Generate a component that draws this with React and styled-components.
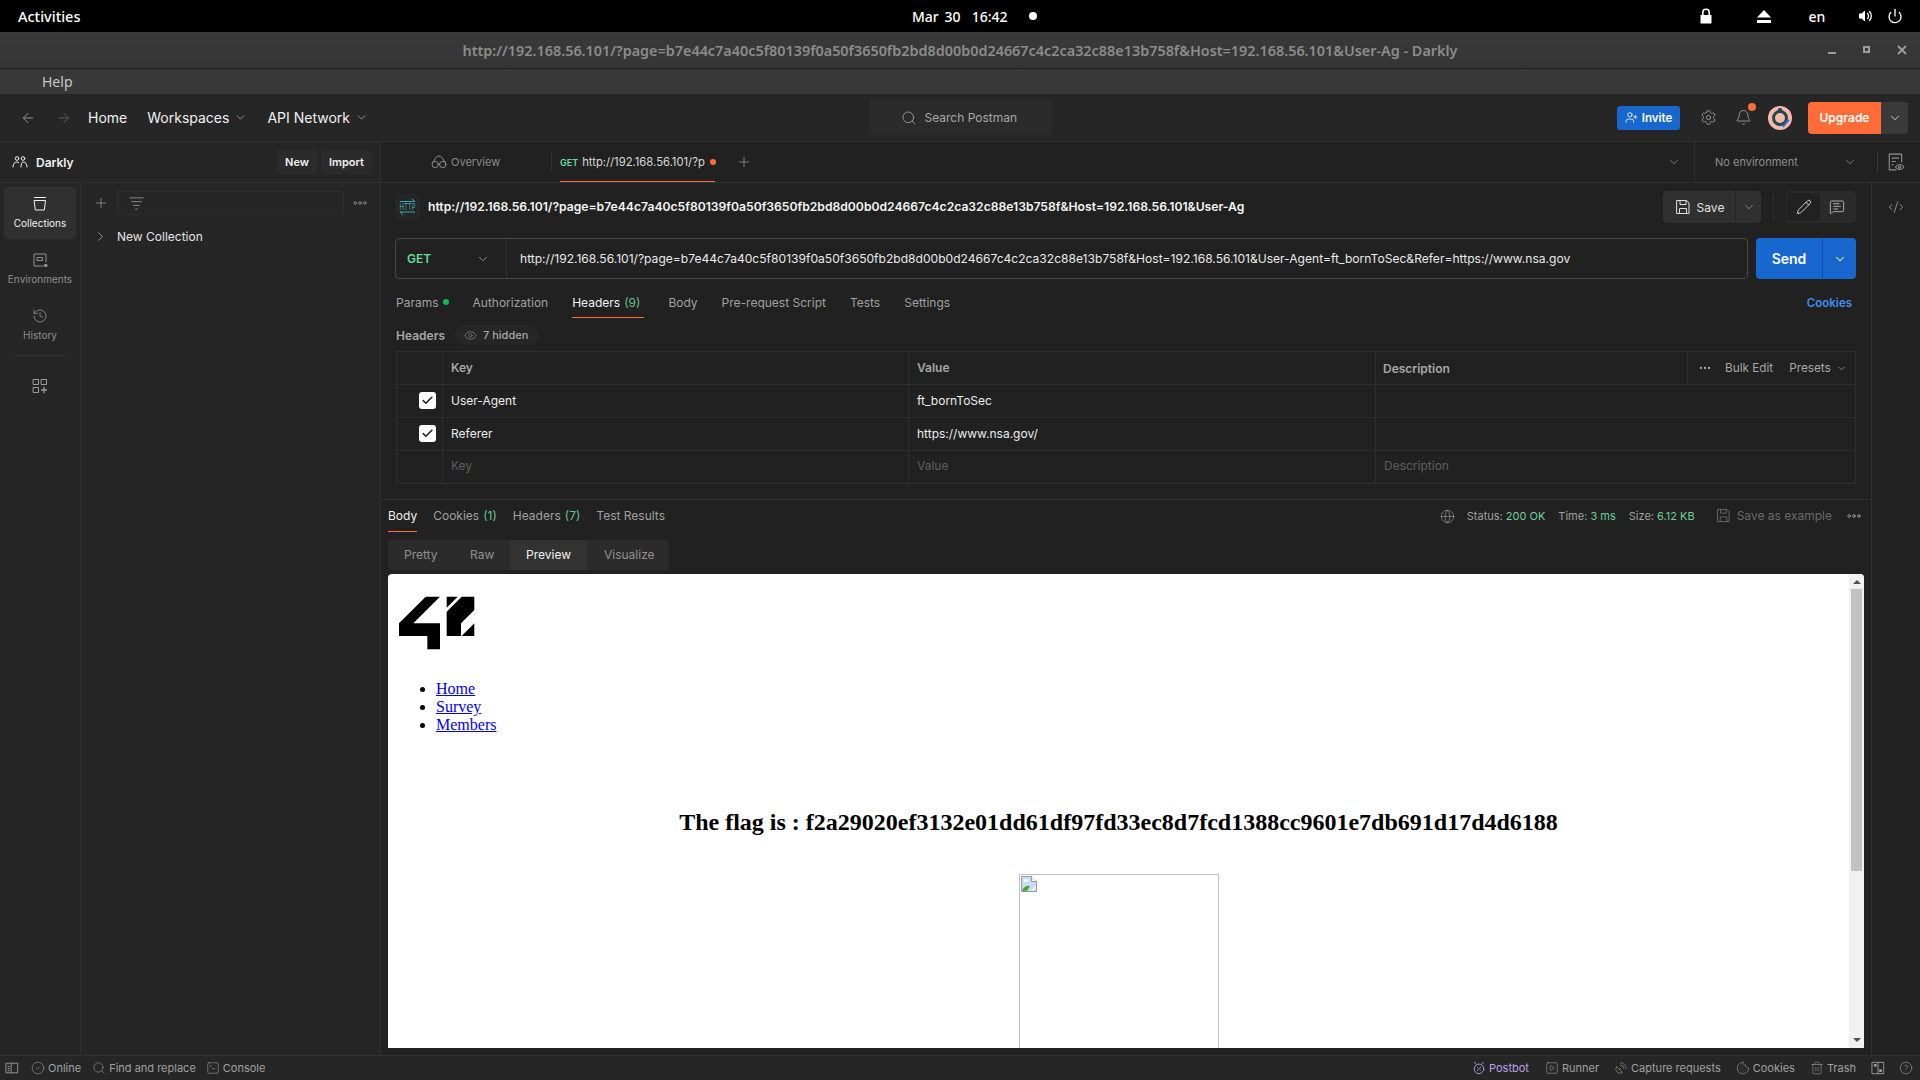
import styled, { createGlobalStyle } from 'styled-components'
import {
  ArrowLeft, ArrowRight, ChevronDown, ChevronRight, Search, Settings, Bell, Plus, History, Pencil,
  CodeXml, Eye, Globe, CircleCheck, SquareTerminal, SquarePlay, SatelliteDish, Cookie, Trash2, CircleHelp,
  Power, Check, MessageSquareText, UserPlus, Ellipsis,
} from 'lucide-react'

const GlobalStyle = createGlobalStyle`
  html, body { margin: 0; padding: 0; background: #212121; }
  * { box-sizing: border-box; }
`

const Page = styled.div`
  width: 1920px;
  height: 1080px;
  overflow: hidden;
  display: flex;
  flex-direction: column;
  background: #212121;
  font-family: Inter, "Liberation Sans", sans-serif;
  font-size: 12px;
  color: #a6a6a6;
`

const TopBar = styled.div`
  flex: 0 0 32px;
  background: #000;
  color: #fff;
  display: grid;
  grid-template-columns: 912px 1fr auto;
  align-items: center;
  font-family: "Noto Sans", sans-serif;
  font-size: 14px;
  font-weight: 500;
`

const Activities = styled.span`
  padding-left: 18px;
  font-size: 14.5px;
`

const Clock = styled.div`
  display: flex;
  align-items: center;
  gap: 21px;
  word-spacing: 2px;
`

const ClockDot = styled.span`
  width: 8px;
  height: 8px;
  border-radius: 50%;
  background: #fff;
`

const Tray = styled.div`
  display: flex;
  align-items: center;
  padding-right: 13px;
`

const TrayItem = styled.span`
  display: flex;
  justify-content: center;
  align-items: center;
  width: ${p => p.$w}px;
`

const TitleBar = styled.div`
  flex: 0 0 37px;
  position: relative;
  display: flex;
  align-items: center;
  justify-content: center;
  background: linear-gradient(#3a3a3a, #353535);
  border-bottom: 1px solid #222;
  color: #8c8c8c;
  font-family: "Noto Sans", sans-serif;
  font-size: 14.4px;
  font-weight: 600;
`

const WindowButtons = styled.div`
  position: absolute;
  right: 13px;
  top: 0;
  height: 36px;
  display: flex;
  align-items: center;
  gap: 25px;
  color: #9c9c9c;
`

const MenuBar = styled.div`
  flex: 0 0 25px;
  background: #383838;
  color: #c8c8c8;
  padding-left: 42px;
  font-family: "Noto Sans", sans-serif;
  font-size: 14px;
  line-height: 25px;
`

const Header = styled.div`
  flex: 0 0 48px;
  display: grid;
  grid-template-columns: 1fr 183px 1fr;
  align-items: center;
  background: #262626;
  border-bottom: 1px solid #303030;
`

const HeaderLeft = styled.nav`
  display: flex;
  align-items: center;
  padding-left: 20px;
`

const NavArrow = styled.span`
  display: flex;
  width: 16px;
  margin-right: ${p => p.$mr}px;
  color: ${p => (p.$off ? '#5c5c5c' : '#909090')};
`

const NavLink = styled.span`
  display: flex;
  align-items: center;
  gap: 5px;
  margin-right: ${p => p.$mr}px;
  font-size: 14px;
  color: #f0f0f0;
  svg { color: #a6a6a6; }
`

const SearchBox = styled.div`
  height: 35px;
  display: flex;
  align-items: center;
  gap: 8px;
  padding-left: 32px;
  background: #2b2b2b;
  border-radius: 4px;
  color: #a6a6a6;
`

const HeaderRight = styled.div`
  display: flex;
  align-items: center;
  justify-content: flex-end;
  padding-right: 12px;
`

const InviteButton = styled.span`
  width: 63px;
  height: 24px;
  display: flex;
  align-items: center;
  justify-content: center;
  gap: 4px;
  background: #1767cf;
  border-radius: 3px;
  color: #fff;
  font-weight: 600;
  font-size: 11.5px;
`

const HeaderIcon = styled.span`
  position: relative;
  display: flex;
  margin-left: ${p => p.$ml}px;
  color: #a0a0a0;
`

const BellDot = styled.span`
  position: absolute;
  top: -6px;
  right: -4px;
  width: 8px;
  height: 8px;
  border-radius: 50%;
  background: #ff6c37;
`

const UpgradeGroup = styled.div`
  display: flex;
  height: 32px;
  margin-left: 16px;
  border-radius: 4px;
  overflow: hidden;
`

const UpgradeButton = styled.span`
  width: 73px;
  display: flex;
  align-items: center;
  justify-content: center;
  background: #ff6c37;
  color: #fff;
  font-weight: 600;
`

const UpgradeCaret = styled.span`
  width: 27px;
  display: flex;
  align-items: center;
  justify-content: center;
  background: #3a3a3a;
  color: #e0e0e0;
`

const Body = styled.div`
  flex: 1;
  display: flex;
  min-height: 0;
`

const Sidebar = styled.aside`
  flex: 0 0 381px;
  display: flex;
  flex-direction: column;
  background: #262626;
  border-right: 1px solid #303030;
`

const SidebarHeader = styled.div`
  flex: 0 0 41px;
  display: flex;
  align-items: center;
  padding: 0 8px 0 12px;
  border-bottom: 1px solid #303030;
  color: #f0f0f0;
`

const TeamName = styled.strong`
  margin-left: 8px;
  margin-right: auto;
  font-weight: 600;
`

const SmallButton = styled.span`
  width: ${p => p.$w}px;
  height: 24px;
  display: flex;
  align-items: center;
  justify-content: center;
  margin-left: 4px;
  background: #2b2b2b;
  border-radius: 4px;
  color: #f0f0f0;
  font-size: 11px;
  font-weight: 600;
`

const SidebarBody = styled.div`
  flex: 1;
  display: flex;
`

const SideNav = styled.div`
  flex: 0 0 81px;
  display: flex;
  flex-direction: column;
  align-items: center;
  padding-top: 4px;
  border-right: 1px solid #303030;
`

const NavItem = styled.div`
  width: 72px;
  height: 52px;
  margin-bottom: 4px;
  padding-bottom: 2px;
  display: flex;
  flex-direction: column;
  align-items: center;
  justify-content: center;
  gap: 5px;
  border-radius: 4px;
  font-size: 10px;
  background: ${p => (p.$active ? '#303030' : 'transparent')};
  color: ${p => (p.$active ? '#f0f0f0' : '#8f8f8f')};
`

const NavDivider = styled.div`
  width: 54px;
  height: 1px;
  margin: 0 0 22px;
  background: #303030;
`

const NavAdd = styled.span`
  display: flex;
  color: #9c9c9c;
`

const Tree = styled.div`
  flex: 1;
  padding: 8px 0 0 12px;
`

const TreeTools = styled.div`
  display: flex;
  align-items: center;
  height: 24px;
  color: #8f8f8f;
`

const FilterBox = styled.div`
  width: 227px;
  height: 24px;
  margin-left: 8px;
  padding-left: 11px;
  display: flex;
  align-items: center;
  border: 1px solid #2e2e2e;
  border-radius: 2px;
`

const TreeMenu = styled.span`
  display: flex;
  margin-left: 9px;
`

const TreeRow = styled.div`
  display: flex;
  align-items: center;
  gap: 9px;
  height: 24px;
  margin-top: 9px;
  color: #e4e4e4;
  svg { color: #b0b0b0; }
`

const Main = styled.main`
  flex: 1;
  min-width: 0;
  display: flex;
  flex-direction: column;
`

const TabBar = styled.div`
  flex: 0 0 41px;
  display: flex;
  align-items: stretch;
  border-bottom: 1px solid #303030;
`

const OverviewTab = styled.div`
  width: 170px;
  padding-left: 50px;
  display: flex;
  align-items: center;
  gap: 4px;
  color: #8a8a8a;
  font-size: 11px;
`

const RequestTab = styled.div`
  position: relative;
  width: 155px;
  margin-left: 9px;
  display: flex;
  align-items: center;
  gap: 4px;
  color: #d8d8d8;
  font-size: 11.25px;
  white-space: nowrap;
  box-shadow: inset 0 -1px 0 #ff6c37;
  &::before {
    content: '';
    position: absolute;
    left: -9px;
    top: 10px;
    bottom: 10px;
    width: 1px;
    background: #303030;
  }
`

const TabMethod = styled.span`
  color: #6bdd9a;
  font-size: 9px;
  font-weight: 600;
`

const UnsavedDot = styled.span`
  flex: 0 0 6px;
  height: 6px;
  margin-left: 1px;
  border-radius: 50%;
  background: #ff6c37;
`

const TabPlus = styled.span`
  display: flex;
  align-items: center;
  margin-left: 21px;
  color: #8f8f8f;
`

const TabEnd = styled.div`
  margin-left: auto;
  display: flex;
  align-items: center;
  color: #8f8f8f;
`

const TabCaret = styled.span`
  display: flex;
  margin-right: 13px;
`

const EnvSelect = styled.div`
  width: 183px;
  height: 100%;
  padding: 0 20px;
  display: flex;
  align-items: center;
  justify-content: space-between;
  border-left: 1px solid #303030;
  font-size: 11px;
`

const EnvEye = styled.span`
  width: 43px;
  height: 20px;
  padding-left: 9px;
  display: flex;
  align-items: center;
  border-left: 1px solid #3a3a3a;
`

const Content = styled.div`
  flex: 1;
  display: flex;
  min-height: 0;
`

const Workspace = styled.div`
  flex: 0 0 1490px;
  display: flex;
  flex-direction: column;
  min-height: 0;
`

const Rail = styled.div`
  flex: 1;
  border-left: 1px solid #303030;
  display: flex;
  justify-content: center;
  padding-top: 16px;
  color: #a0a0a0;
`

const RequestPane = styled.section`
  flex: 0 0 316px;
  padding: 8px 15px 0 14px;
`

const NameRow = styled.div`
  display: flex;
  align-items: center;
  height: 32px;
`

const HttpBadge = styled.span`
  width: 25px;
  height: 26px;
  display: flex;
  align-items: center;
  justify-content: center;
  background: #262626;
  border-radius: 4px;
`

const RequestName = styled.strong`
  margin-left: 8px;
  margin-right: auto;
  padding-bottom: 2px;
  color: #f4f4f4;
  font-size: 12.15px;
  font-weight: 600;
  white-space: nowrap;
`

const SaveGroup = styled.div`
  width: 98px;
  height: 32px;
  display: flex;
  background: #303030;
  border-radius: 4px;
  color: #e0e0e0;
`

const SaveButton = styled.span`
  width: 73px;
  padding-left: 1px;
  display: flex;
  align-items: center;
  justify-content: center;
  gap: 6px;
  border-right: 1px solid #262626;
`

const SaveCaret = styled.span`
  flex: 1;
  display: flex;
  align-items: center;
  justify-content: center;
  color: #a0a0a0;
`

const ModeGroup = styled.div`
  width: 70px;
  height: 32px;
  margin-left: 25px;
  padding: 2px 3px 2px 1px;
  display: flex;
  align-items: center;
  background: #2b2b2b;
  border-radius: 4px;
  position: relative;
  color: #c4c4c4;
  &::before {
    content: '';
    position: absolute;
    left: -13px;
    top: 2px;
    bottom: 2px;
    width: 1px;
    background: #2e2e2e;
  }
`

const ModeItem = styled.span`
  width: 33px;
  height: 28px;
  display: flex;
  align-items: center;
  justify-content: center;
  border-radius: 3px;
  background: ${p => (p.$active ? '#212121' : 'transparent')};
  color: ${p => (p.$active ? '#f0f0f0' : 'inherit')};
`

const UrlRow = styled.div`
  display: flex;
  gap: 8px;
  margin-top: 15px;
  height: 41px;
`

const UrlInput = styled.div`
  flex: 1;
  display: flex;
  align-items: center;
  border: 1px solid #4a4a4a;
  border-radius: 4px;
`

const MethodSelect = styled.div`
  width: 111px;
  height: 100%;
  padding: 0 16px 0 11px;
  display: flex;
  align-items: center;
  justify-content: space-between;
  border-right: 1px solid #303030;
  color: #6bdd9a;
  font-weight: 600;
  svg { color: #a0a0a0; }
`

const UrlText = styled.span`
  padding-left: 13px;
  color: #eaeaea;
  font-size: 12.07px;
  white-space: nowrap;
`

const SendGroup = styled.div`
  width: 100px;
  display: flex;
  background: #1767cf;
  border-radius: 4px;
  color: #fff;
`

const SendButton = styled.span`
  width: 67px;
  display: flex;
  align-items: center;
  justify-content: center;
  font-size: 14px;
  font-weight: 600;
  border-right: 1px solid #12519f;
`

const SendCaret = styled.span`
  flex: 1;
  display: flex;
  align-items: center;
  justify-content: center;
`

const ReqTabs = styled.div`
  display: flex;
  gap: 24px;
  height: 31px;
  margin: 8px 0 0 1px;
`

const ReqTab = styled.span`
  display: flex;
  align-items: center;
  gap: 4px;
  padding: 0 ${p => p.$pr || 0}px 1px 0;
  white-space: nowrap;
  color: ${p => (p.$active ? '#f0f0f0' : '#a0a0a0')};
  box-shadow: ${p => (p.$active ? 'inset 0 -1px 0 #ff6c37' : 'none')};
`

const Count = styled.span`
  color: #5fc48c;
`

const GreenDot = styled.span`
  width: 6px;
  height: 6px;
  border-radius: 50%;
  background: #0cbb52;
`

const CookiesLink = styled.span`
  margin-left: auto;
  margin-right: 4px;
  align-self: center;
  color: #3f8fea;
  font-weight: 600;
  font-size: 11.5px;
`

const HeadersRow = styled.div`
  display: flex;
  align-items: center;
  gap: 10px;
  margin: 7px 0 6px 1px;
  height: 20px;
`

const HeadersLabel = styled.strong`
  font-weight: 600;
  color: #a6a6a6;
`

const HiddenPill = styled.span`
  width: 84px;
  height: 20px;
  padding-left: 9px;
  display: flex;
  align-items: center;
  gap: 6px;
  background: #262626;
  border-radius: 10px;
  color: #a6a6a6;
  font-size: 11px;
  font-weight: 500;
  svg { color: #7a7a7a; }
`

const Table = styled.div`
  width: 1460px;
  margin-left: 1px;
  border: 1px solid #2e2e2e;
  border-bottom: 0;
`

const TableRow = styled.div`
  display: grid;
  grid-template-columns: 45px 466px 467px 1fr;
  height: 33px;
  border-bottom: 1px solid #2e2e2e;
`

const Cell = styled.div`
  display: flex;
  align-items: center;
  padding: 0 0 ${p => (p.$muted ? 4 : 2)}px 8px;
  border-left: ${p => (p.$first ? '0' : '1px solid #2e2e2e')};
  font-weight: ${p => (p.$head ? 600 : 400)};
  color: ${p => (p.$head ? '#a6a6a6' : p.$muted ? '#5e5e5e' : '#ececec')};
`

const CheckCell = styled(Cell)`
  padding-left: 22px;
`

const CheckBox = styled.span`
  width: 17px;
  height: 17px;
  display: flex;
  align-items: center;
  justify-content: center;
  background: #fff;
  border-radius: 3px;
  color: #212121;
`

const DescriptionHead = styled(Cell)`
  padding: 0 0 0 7px;
  justify-content: space-between;
`

const TableTools = styled.div`
  width: 168px;
  height: 100%;
  padding-left: 10px;
  display: flex;
  align-items: center;
  border-left: 1px solid #2e2e2e;
  font-weight: 400;
  font-size: 11.75px;
`

const BulkEdit = styled.span`
  margin: 0 16px 0 13px;
  white-space: nowrap;
`

const PresetsMenu = styled.span`
  display: flex;
  align-items: center;
  gap: 5px;
`

const ResponsePane = styled.section`
  flex: 1;
  min-height: 0;
  display: flex;
  flex-direction: column;
  padding: 0 7px 7px;
  border-top: 1px solid #303030;
`

const ResTabs = styled.div`
  flex: 0 0 32px;
  display: flex;
  gap: 16px;
`

const StatusInfo = styled.div`
  margin-left: auto;
  display: flex;
  align-items: center;
  font-size: 11px;
  color: #a0a0a0;
  white-space: nowrap;
`

const StatusPair = styled.span`
  margin-left: ${p => p.$ml}px;
`

const Good = styled.span`
  color: #6bd09b;
`

const SaveExample = styled.span`
  display: flex;
  align-items: center;
  gap: 6px;
  margin-left: 21px;
  padding-bottom: 2px;
  color: #6a6a6a;
  font-size: 12px;
`

const StatusMenu = styled.span`
  display: flex;
  margin: 0 3px 0 15px;
`

const ModeTabs = styled.div`
  flex: 0 0 30px;
  width: 281px;
  margin: 8px 0 4px;
  display: flex;
  background: #2b2b2b;
  border-radius: 4px;
  overflow: hidden;
`

const ModeTab = styled.span`
  width: ${p => p.$w}px;
  padding: 0 0 1px ${p => p.$pl}px;
  display: flex;
  align-items: center;
  background: ${p => (p.$active ? '#333' : 'transparent')};
  color: ${p => (p.$active ? '#f0f0f0' : '#8f8f8f')};
`

const Frame = styled.div`
  flex: 1;
  min-height: 0;
  display: flex;
  background: #fff;
  border-radius: 4px 4px 0 0;
  overflow: hidden;
`

const FrameDoc = styled.div`
  flex: 1;
  padding: 8px;
  overflow: hidden;
  color: #000;
  font-family: "Liberation Serif", serif;
  font-size: 16px;
  line-height: 18px;
`

const Logo = styled.svg`
  display: block;
  width: 80px;
  height: 80px;
`

const DocList = styled.ul`
  margin: 18px 0 16px;
  padding-left: 40px;
  a { color: #0000ee; text-decoration: underline; }
`

const Flag = styled.h2`
  margin: 75px 0 38px;
  font-size: 24px;
  line-height: 27px;
  text-align: center;
`

const BrokenImage = styled.div`
  width: 200px;
  height: 200px;
  margin: 0 auto;
  padding: 1px;
  border: 1px solid #c0c0c0;
`

const Scrollbar = styled.div`
  flex: 0 0 15px;
  display: flex;
  flex-direction: column;
  align-items: center;
  background: #f1f1f1;
  padding-top: 6px;
`

const ScrollArrow = styled.span`
  width: 0;
  height: 0;
  border-left: 4px solid transparent;
  border-right: 4px solid transparent;
  border-${p => (p.$down ? 'top' : 'bottom')}: 4px solid #505050;
`

const ScrollThumb = styled.span`
  width: 11px;
  height: 282px;
  margin-top: 5px;
  margin-bottom: auto;
  background: #c1c1c1;
`

const ScrollEnd = styled.span`
  margin-bottom: 6px;
  display: flex;
`

const StatusBar = styled.footer`
  flex: 0 0 25px;
  display: flex;
  align-items: center;
  padding: 0 7px 0 5px;
  background: #262626;
  border-top: 1px solid #303030;
  color: #a0a0a0;
  font-size: 11px;
`

const StatusItem = styled.span`
  display: flex;
  align-items: center;
  gap: 3px;
  margin-left: ${p => p.$ml || 0}px;
  color: ${p => p.$color || 'inherit'};
  white-space: nowrap;
`

const StatusSpacer = styled.span`
  flex: 1;
`

const Icon = ({ size = 16, children, fill = 'none', sw = 1 }) => (
  <svg width={size} height={size} viewBox="0 0 16 16" fill={fill} stroke="currentColor" strokeWidth={sw} strokeLinecap="round" strokeLinejoin="round">
    {children}
  </svg>
)

const LockIcon = () => (
  <svg width="14" height="16" viewBox="0 0 14 16" fill="#fff">
    <path d="M1.5 7h11v8.5h-11z" />
    <path d="M3.8 7V4.5a3.2 3.2 0 0 1 6.4 0V7" fill="none" stroke="#fff" strokeWidth="1.6" />
  </svg>
)

const EjectIcon = () => (
  <svg width="16" height="15" viewBox="0 0 16 15" fill="#fff">
    <path d="M8 1l7 7.5H1z" />
    <path d="M1 11h14v3H1z" />
  </svg>
)

const VolumeIcon = () => (
  <svg width="16" height="16" viewBox="0 0 16 16" fill="#fff">
    <path d="M1 5.5h2.5L7 2.5v11l-3.5-3H1z" />
    <path d="M9.2 5a4 4 0 0 1 0 6M11.2 3a7 7 0 0 1 0 10" fill="none" stroke="#fff" strokeWidth="1.3" />
  </svg>
)

const TeamIcon = () => (
  <Icon size={16}>
    <circle cx="5" cy="4.5" r="1.8" />
    <circle cx="11" cy="4.5" r="1.8" />
    <path d="M1 13c0-3 1.5-5 3.8-5 .8 0 1.5.2 2 .7M9 13c0-3 .7-5 2.2-5 2.3 0 3.8 2 3.8 5" />
  </Icon>
)

const CollectionsIcon = () => (
  <Icon>
    <path d="M2.5 1.5h11" />
    <path d="M2.5 4.5h11l-1.2 9.5H3.7z" />
  </Icon>
)

const EnvironmentsIcon = () => (
  <Icon>
    <path d="M14 10V2H2v12h9" />
    <rect x="5.5" y="5.5" width="5" height="3" />
    <rect x="13" y="12.5" width="2" height="2" fill="currentColor" />
  </Icon>
)

const AddBlocksIcon = () => (
  <Icon>
    <rect x="1.5" y="1.5" width="5" height="5" />
    <rect x="9.5" y="1.5" width="5" height="5" />
    <rect x="1.5" y="9.5" width="5" height="5" />
    <path d="M12 9.5v5M9.5 12h5" strokeWidth="1.4" />
  </Icon>
)

const FilterIcon = () => (
  <Icon size={15}>
    <path d="M1 2h14M3 6h10M5 10h6M7 14h2" />
  </Icon>
)

const RingDots = () => (
  <Icon size={14}>
    <circle cx="2.5" cy="8" r="1.5" />
    <circle cx="8" cy="8" r="1.5" />
    <circle cx="13.5" cy="8" r="1.5" />
  </Icon>
)

const OverviewIcon = () => (
  <Icon>
    <circle cx="4.2" cy="10.5" r="3.2" />
    <circle cx="11.8" cy="10.5" r="3.2" />
    <path d="M1.6 8.5L5 3.5a3.8 3.8 0 0 1 6 0l3.4 5M7.4 10h1.2" />
  </Icon>
)

const HttpIcon = () => (
  <svg width="25" height="20" viewBox="0 0 25 20" fill="none" stroke="#3ba7b5">
    <path d="M5 4.5h15M17 2l3 2.5M5 15h15M8 17.5L5 15" />
    <text transform="translate(12.5 13) scale(0.75 1.15)" textAnchor="middle" fill="#3ba7b5" stroke="none" fontSize="8" fontFamily="Inter, sans-serif">HTTP</text>
  </svg>
)

const SaveIcon = ({ size = 16 }) => (
  <Icon size={size}>
    <path d="M2 1.5h9.5l2.5 2.5v10.5H2z" />
    <path d="M5 1.5v4h6v-4M4.5 14.5v-5h7v5" />
  </Icon>
)

const AvatarIcon = () => (
  <svg width="24" height="24" viewBox="0 0 24 24">
    <circle cx="12" cy="12" r="12" fill="#f6b9ab" />
    <circle cx="12" cy="12" r="6.5" fill="#f6b9ab" stroke="#24474d" strokeWidth="3" />
    <circle cx="12" cy="4.5" r="2.4" fill="#24474d" />
    <path d="M14 20l6-7 1.5 1.5-6 7z" fill="#1f6fd6" />
  </svg>
)

const EnvEyeIcon = () => (
  <Icon size={18}>
    <path d="M8 15H2V1h11v7" />
    <path d="M4.5 4.5h6M4.5 7.5h3M4.5 10.5h1" />
    <path d="M7.5 12.5c1.8-3 5.7-3 7.5 0-1.8 3-5.7 3-7.5 0z" />
    <circle cx="11.2" cy="12.5" r="1" />
  </Icon>
)

const PanelIcon = () => (
  <Icon size={14}>
    <rect x="1.5" y="2.5" width="13" height="11" />
    <path d="M7 2.5v11M3.5 6h1.5M3.5 8.5h1.5M3.5 11h1.5" />
  </Icon>
)

const BotIcon = () => (
  <Icon size={14}>
    <circle cx="8" cy="9" r="5.5" />
    <path d="M6 11l4-4M6.5 7.5h.01M9.5 10.5h.01M3 1.5l1.5 2M13 1.5l-1.5 2" />
  </Icon>
)

const PaneIcon = () => (
  <Icon size={14}>
    <rect x="1.5" y="1.5" width="13" height="13" />
    <path d="M8 1.5v13" />
    <rect x="4" y="4" width="2" height="2" fill="currentColor" />
    <rect x="10" y="10" width="2" height="2" fill="currentColor" />
  </Icon>
)

const BrokenIcon = () => (
  <svg width="16" height="16" viewBox="0 0 16 16" style={{ display: 'block' }}>
    <path d="M.5.5h10l5 5v10H.5z" fill="#c9dcf7" stroke="#9a9a9a" />
    <path d="M10.5.5v5h5" fill="#fff" stroke="#9a9a9a" />
    <ellipse cx="5" cy="4.5" rx="2.5" ry="1.2" fill="#fff" />
    <path d="M1 15c1-4 5-6 8-5l-3 5z" fill="#4ea535" />
    <path d="M10 15l5-5v2l-3 3z" fill="#fff" />
  </svg>
)

const FortyTwoLogo = () => (
  <Logo viewBox="3 -24 240 240" fill="#000">
    <path d="M12 100L92 20H135L55 100H135V178H97V138H12z" />
    <path d="M155 20H188L155 53z" />
    <path d="M200 20H238V60L198 100V138H155V65z" />
    <path d="M238 100V138H200z" />
  </Logo>
)

const page = 'b7e44c7a40c5f80139f0a50f3650fb2bd8d00b0d24667c4c2ca32c88e13b758f'
const shortUrl = `http://192.168.56.101/?page=${page}&Host=192.168.56.101&User-Ag`
const fullUrl = `http://192.168.56.101/?page=${page}&Host=192.168.56.101&User-Agent=ft_bornToSec&Refer=https://www.nsa.gov`

const headers = [
  { key: 'User-Agent', value: 'ft_bornToSec' },
  { key: 'Referer', value: 'https://www.nsa.gov/' },
]

const App = () => (
  <Page>
    <GlobalStyle />
    <TopBar>
      <Activities>Activities</Activities>
      <Clock>
        <span>Mar 30 &nbsp;16:42</span>
        <ClockDot />
      </Clock>
      <Tray>
        <TrayItem $w={74}><LockIcon /></TrayItem>
        <TrayItem $w={42}><EjectIcon /></TrayItem>
        <TrayItem $w={64}>en</TrayItem>
        <TrayItem $w={34}><VolumeIcon /></TrayItem>
        <TrayItem $w={24}><Power size={16} strokeWidth={2} /></TrayItem>
      </Tray>
    </TopBar>

    <TitleBar>
      {shortUrl} - Darkly
      <WindowButtons>
        <svg width="10" height="10" viewBox="0 0 10 10" stroke="currentColor" strokeWidth="2"><path d="M1 8h8" /></svg>
        <svg width="10" height="10" viewBox="0 0 10 10" fill="none" stroke="currentColor" strokeWidth="2"><rect x="2" y="2" width="5" height="5" /></svg>
        <svg width="10" height="10" viewBox="0 0 10 10" stroke="currentColor" strokeWidth="2"><path d="M1 1l8 8M9 1l-8 8" /></svg>
      </WindowButtons>
    </TitleBar>

    <MenuBar>Help</MenuBar>

    <Header>
      <HeaderLeft>
        <NavArrow $mr={20}><ArrowLeft size={16} strokeWidth={1.5} /></NavArrow>
        <NavArrow $off $mr={16}><ArrowRight size={16} strokeWidth={1.5} /></NavArrow>
        <NavLink $mr={20}>Home</NavLink>
        <NavLink $mr={20}>Workspaces <ChevronDown size={13} strokeWidth={1.5} /></NavLink>
        <NavLink>API Network <ChevronDown size={13} strokeWidth={1.5} /></NavLink>
      </HeaderLeft>
      <SearchBox>
        <Search size={16} strokeWidth={1.25} />
        Search Postman
      </SearchBox>
      <HeaderRight>
        <InviteButton><UserPlus size={13} strokeWidth={1.5} /> Invite</InviteButton>
        <HeaderIcon $ml={20}><Settings size={17} strokeWidth={1.25} /></HeaderIcon>
        <HeaderIcon $ml={18}><Bell size={17} strokeWidth={1.25} /><BellDot /></HeaderIcon>
        <HeaderIcon $ml={16}><AvatarIcon /></HeaderIcon>
        <UpgradeGroup>
          <UpgradeButton>Upgrade</UpgradeButton>
          <UpgradeCaret><ChevronDown size={14} strokeWidth={1.5} /></UpgradeCaret>
        </UpgradeGroup>
      </HeaderRight>
    </Header>

    <Body>
      <Sidebar>
        <SidebarHeader>
          <TeamIcon />
          <TeamName>Darkly</TeamName>
          <SmallButton $w={40}>New</SmallButton>
          <SmallButton $w={51}>Import</SmallButton>
        </SidebarHeader>
        <SidebarBody>
          <SideNav>
            <NavItem $active><CollectionsIcon />Collections</NavItem>
            <NavItem><EnvironmentsIcon />Environments</NavItem>
            <NavItem><History size={16} strokeWidth={1.25} />History</NavItem>
            <NavDivider />
            <NavAdd><AddBlocksIcon /></NavAdd>
          </SideNav>
          <Tree>
            <TreeTools>
              <Plus size={16} strokeWidth={1.25} />
              <FilterBox><FilterIcon /></FilterBox>
              <TreeMenu><RingDots /></TreeMenu>
            </TreeTools>
            <TreeRow>
              <ChevronRight size={15} strokeWidth={1.25} />
              New Collection
            </TreeRow>
          </Tree>
        </SidebarBody>
      </Sidebar>

      <Main>
        <TabBar>
          <OverviewTab><OverviewIcon />Overview</OverviewTab>
          <RequestTab>
            <TabMethod>GET</TabMethod>
            http://192.168.56.101/?p
            <UnsavedDot />
          </RequestTab>
          <TabPlus><Plus size={16} strokeWidth={1.25} /></TabPlus>
          <TabEnd>
            <TabCaret><ChevronDown size={14} strokeWidth={1.25} /></TabCaret>
            <EnvSelect>No environment <ChevronDown size={14} strokeWidth={1.25} /></EnvSelect>
            <EnvEye><EnvEyeIcon /></EnvEye>
          </TabEnd>
        </TabBar>

        <Content>
          <Workspace>
            <RequestPane>
              <NameRow>
                <HttpBadge><HttpIcon /></HttpBadge>
                <RequestName>{shortUrl}</RequestName>
                <SaveGroup>
                  <SaveButton><SaveIcon />Save</SaveButton>
                  <SaveCaret><ChevronDown size={14} strokeWidth={1.25} /></SaveCaret>
                </SaveGroup>
                <ModeGroup>
                  <ModeItem $active><Pencil size={16} strokeWidth={1.25} /></ModeItem>
                  <ModeItem><MessageSquareText size={16} strokeWidth={1.25} /></ModeItem>
                </ModeGroup>
              </NameRow>

              <UrlRow>
                <UrlInput>
                  <MethodSelect>GET <ChevronDown size={14} strokeWidth={1.5} /></MethodSelect>
                  <UrlText>{fullUrl}</UrlText>
                </UrlInput>
                <SendGroup>
                  <SendButton>Send</SendButton>
                  <SendCaret><ChevronDown size={14} strokeWidth={1.75} /></SendCaret>
                </SendGroup>
              </UrlRow>

              <ReqTabs>
                <ReqTab>Params <GreenDot /></ReqTab>
                <ReqTab>Authorization</ReqTab>
                <ReqTab $active $pr={4}>Headers <Count>(9)</Count></ReqTab>
                <ReqTab>Body</ReqTab>
                <ReqTab>Pre-request Script</ReqTab>
                <ReqTab>Tests</ReqTab>
                <ReqTab>Settings</ReqTab>
                <CookiesLink>Cookies</CookiesLink>
              </ReqTabs>

              <HeadersRow>
                <HeadersLabel>Headers</HeadersLabel>
                <HiddenPill><Eye size={13} strokeWidth={1.5} />7 hidden</HiddenPill>
              </HeadersRow>

              <Table>
                <TableRow>
                  <Cell $first />
                  <Cell $head>Key</Cell>
                  <Cell $head>Value</Cell>
                  <DescriptionHead $head>
                    Description
                    <TableTools>
                      <Ellipsis size={14} />
                      <BulkEdit>Bulk Edit</BulkEdit>
                      <PresetsMenu>Presets <ChevronDown size={11} strokeWidth={1.5} /></PresetsMenu>
                    </TableTools>
                  </DescriptionHead>
                </TableRow>
                {headers.map(({ key, value }) => (
                  <TableRow key={key}>
                    <CheckCell $first><CheckBox><Check size={13} strokeWidth={3} /></CheckBox></CheckCell>
                    <Cell>{key}</Cell>
                    <Cell>{value}</Cell>
                    <Cell />
                  </TableRow>
                ))}
                <TableRow>
                  <Cell $first />
                  <Cell $muted>Key</Cell>
                  <Cell $muted>Value</Cell>
                  <Cell $muted>Description</Cell>
                </TableRow>
              </Table>
            </RequestPane>

            <ResponsePane>
              <ResTabs>
                <ReqTab $active>Body</ReqTab>
                <ReqTab>Cookies <Count>(1)</Count></ReqTab>
                <ReqTab>Headers <Count>(7)</Count></ReqTab>
                <ReqTab>Test Results</ReqTab>
                <StatusInfo>
                  <Globe size={15} strokeWidth={1} />
                  <StatusPair $ml={12}>Status: <Good>200 OK</Good></StatusPair>
                  <StatusPair $ml={13}>Time: <Good>3 ms</Good></StatusPair>
                  <StatusPair $ml={13}>Size: <Good>6.12 KB</Good></StatusPair>
                  <SaveExample><SaveIcon size={15} />Save as example</SaveExample>
                  <StatusMenu><RingDots /></StatusMenu>
                </StatusInfo>
              </ResTabs>

              <ModeTabs>
                <ModeTab $w={66} $pl={16}>Pretty</ModeTab>
                <ModeTab $w={56} $pl={16}>Raw</ModeTab>
                <ModeTab $w={77} $pl={16} $active>Preview</ModeTab>
                <ModeTab $w={82} $pl={17}>Visualize</ModeTab>
              </ModeTabs>

              <Frame>
                <FrameDoc>
                  <FortyTwoLogo />
                  <DocList>
                    <li><a href="#home">Home</a></li>
                    <li><a href="#survey">Survey</a></li>
                    <li><a href="#members">Members</a></li>
                  </DocList>
                  <Flag>The flag is : f2a29020ef3132e01dd61df97fd33ec8d7fcd1388cc9601e7db691d17d4d6188</Flag>
                  <BrokenImage><BrokenIcon /></BrokenImage>
                </FrameDoc>
                <Scrollbar>
                  <ScrollArrow />
                  <ScrollThumb />
                  <ScrollEnd><ScrollArrow $down /></ScrollEnd>
                </Scrollbar>
              </Frame>
            </ResponsePane>
          </Workspace>
          <Rail><CodeXml size={16} strokeWidth={1.25} /></Rail>
        </Content>
      </Main>
    </Body>

    <StatusBar>
      <StatusItem><PanelIcon /></StatusItem>
      <StatusItem $ml={12}><CircleCheck size={14} strokeWidth={1} />Online</StatusItem>
      <StatusItem $ml={11}><Search size={14} strokeWidth={1} />Find and replace</StatusItem>
      <StatusItem $ml={10}><SquareTerminal size={14} strokeWidth={1} />Console</StatusItem>
      <StatusSpacer />
      <StatusItem $color="#b8a3e6"><BotIcon />Postbot</StatusItem>
      <StatusItem $ml={16}><SquarePlay size={14} strokeWidth={1} />Runner</StatusItem>
      <StatusItem $ml={15}><SatelliteDish size={14} strokeWidth={1} />Capture requests</StatusItem>
      <StatusItem $ml={15}><Cookie size={14} strokeWidth={1} />Cookies</StatusItem>
      <StatusItem $ml={15}><Trash2 size={14} strokeWidth={1} />Trash</StatusItem>
      <StatusItem $ml={15}><PaneIcon /></StatusItem>
      <StatusItem $ml={14}><CircleHelp size={14} strokeWidth={1} /></StatusItem>
    </StatusBar>
  </Page>
)

export default App
